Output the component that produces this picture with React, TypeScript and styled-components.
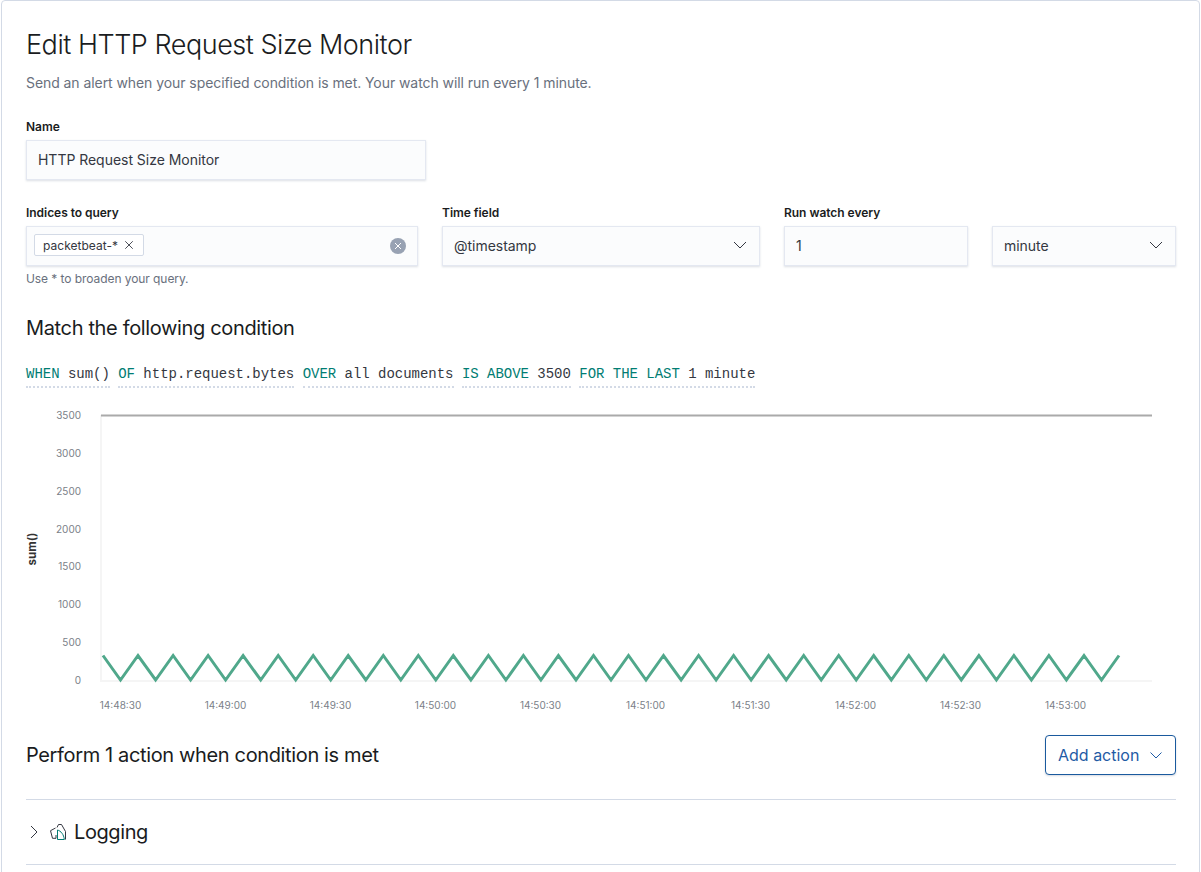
import React from 'react'
import styled, { createGlobalStyle } from 'styled-components'

const GlobalStyle = createGlobalStyle`
  html, body {
    margin: 0;
    padding: 0;
    height: 872px;
    overflow: hidden;
    background: #fff;
    font-family: Inter, "Liberation Sans", sans-serif;
    color: #1a1c21;
  }
`

const Panel = styled.div`
  box-sizing: border-box;
  width: 1199px;
  height: 900px;
  margin-left: 1px;
  padding: 24px 23px 24px 24px;
  background: #fff;
  border: 1px solid #d3dae6;
  border-radius: 4px;
`

const Title = styled.h1`
  margin: 0;
  height: 40px;
  font-size: 27px;
  line-height: 40px;
  font-weight: 300;
  letter-spacing: -0.47px;
`

const Subtitle = styled.p`
  margin: 8px 0 0;
  font-size: 14px;
  line-height: 20px;
  letter-spacing: -0.07px;
  color: #69707d;
`

const Label = styled.label`
  display: block;
  height: 16px;
  margin-bottom: 5px;
  font-size: 12px;
  line-height: 16px;
  font-weight: 600;
  letter-spacing: -0.04px;
`

const NameField = styled.div`
  width: 400px;
  margin-top: 26px;
`

const FieldBox = styled.div`
  box-sizing: border-box;
  display: flex;
  align-items: center;
  justify-content: space-between;
  height: 40px;
  padding: 0 11px 2px;
  background: #fbfcfd;
  border: 1px solid #e4e8f1;
  box-shadow: 0 1px 2px rgba(152, 162, 179, 0.35);
  font-size: 14px;
  letter-spacing: -0.03px;
  color: #343741;
`

const FieldsRow = styled.div`
  display: flex;
  gap: 24px;
  margin-top: 25px;
`

const Field = styled.div<{ $width: number }>`
  flex: none;
  width: ${(p) => p.$width}px;
`

const LabelSpacer = styled.div`
  height: 21px;
`

const Tag = styled.span`
  box-sizing: border-box;
  display: inline-flex;
  align-items: center;
  gap: 6px;
  height: 22px;
  margin-left: -4px;
  padding: 0 9px 0 8px;
  background: #fff;
  border: 1px solid #d3dae6;
  border-radius: 2px;
  font-size: 12px;
  letter-spacing: 0.03px;
  color: #343741;
`

const ClearButton = styled.span`
  display: flex;
  align-items: center;
  justify-content: center;
  width: 16px;
  height: 16px;
  margin-bottom: -2px;
  border-radius: 50%;
  background: #98a2b3;
`

const HelpText = styled.div`
  margin-top: 5px;
  font-size: 12px;
  line-height: 16px;
  letter-spacing: -0.07px;
  color: #69707d;
`

const ConditionHeading = styled.h2`
  margin: 27px 0 0;
  font-size: 20px;
  line-height: 28px;
  font-weight: 400;
  letter-spacing: -0.35px;
`

const Expression = styled.div`
  display: flex;
  gap: 8.4px;
  margin-top: 22px;
  font-family: "Liberation Mono", monospace;
  font-size: 14px;
  line-height: 20px;
  letter-spacing: -0.02px;
`

const ExpressionPart = styled.span`
  padding-bottom: 2px;
  border-bottom: 2px dotted #d3dae6;
  color: #343741;
  white-space: pre;
`

const Keyword = styled.span`
  color: #017d73;
`

const ChartArea = styled.div`
  margin: 17px 0 0 -26px;
`

const ChartSvg = styled.svg`
  display: block;
`

const ChartLabel = styled.text`
  font-family: Inter, sans-serif;
  font-size: 10px;
  fill: #7b7f88;
`

const AxisTitle = styled.text`
  font-family: Inter, sans-serif;
  font-size: 11.5px;
  font-weight: 700;
  fill: #333;
`

const ActionsHeader = styled.div`
  display: flex;
  align-items: center;
  justify-content: space-between;
  margin-top: 15px;
`

const ActionsHeading = styled.h2`
  margin: 0;
  font-size: 20px;
  line-height: 28px;
  font-weight: 400;
  letter-spacing: -0.36px;
`

const AddButton = styled.button`
  box-sizing: border-box;
  display: flex;
  align-items: center;
  justify-content: space-between;
  width: 131px;
  height: 40px;
  padding: 0 13px 0 12px;
  background: #fff;
  border: 1px solid #1a5a9e;
  border-radius: 4px;
  box-shadow: 0 1px 2px rgba(152, 162, 179, 0.4);
  font-family: inherit;
  font-size: 16px;
  white-space: nowrap;
  color: #1f5ba5;
`

const ActionRow = styled.div`
  display: flex;
  align-items: center;
  height: 64px;
  margin-top: 24px;
  border-top: 1px solid #d3dae6;
  border-bottom: 1px solid #d3dae6;
`

const ActionToggle = styled.span`
  display: flex;
  margin-right: 8px;
`

const ActionIcon = styled.span`
  display: flex;
  margin-right: 8px;
`

const ActionName = styled.span`
  font-size: 20px;
  line-height: 28px;
  letter-spacing: -0.4px;
`

const Chevron: React.FC<{ color?: string }> = ({ color = '#343741' }) => (
  <svg width="16" height="16" viewBox="0 0 16 16" fill="none" stroke={color} strokeWidth="1">
    <path d="M2 5l6 6 6-6" />
  </svg>
)

const Cross: React.FC<{ size: number; color: string; weight: number }> = ({ size, color, weight }) => (
  <svg width={size} height={size} viewBox="0 0 16 16" fill="none" stroke={color} strokeWidth={weight}>
    <path d="M2 2l12 12M14 2L2 14" />
  </svg>
)

const yTicks = [
  { label: '3500', y: 415 },
  { label: '3000', y: 453 },
  { label: '2500', y: 491 },
  { label: '2000', y: 529 },
  { label: '1500', y: 566 },
  { label: '1000', y: 604 },
  { label: '500', y: 642 },
  { label: '0', y: 680 },
]

const xLabels = [
  '14:48:30',
  '14:49:00',
  '14:49:30',
  '14:50:00',
  '14:50:30',
  '14:51:00',
  '14:51:30',
  '14:52:00',
  '14:52:30',
  '14:53:00',
]

// zigzag of the series: 29 periods of 35px, starts and ends on a peak
const seriesPoints = () => {
  const points: string[] = []
  for (let i = 0; i <= 58; i++) {
    const x = 103 + i * 17.517
    points.push(`${x.toFixed(1)},${i % 2 === 0 ? 655.5 : 680}`)
  }
  return points.join(' ')
}

const Chart: React.FC = () => (
  <ChartSvg width="1199" height="315" viewBox="0 405 1199 315">
    <path d="M101 415V681H1152" fill="none" stroke="#f5f5f5" strokeWidth="2" />
    <line x1="101" y1="415.5" x2="1152" y2="415.5" stroke="#aaa" strokeWidth="2" />
    <polyline points={seriesPoints()} fill="none" stroke="#50a88b" strokeWidth="3" />
    {yTicks.map((t) => (
      <ChartLabel key={t.label} x="81" y={t.y + 3.5} textAnchor="end">
        {t.label}
      </ChartLabel>
    ))}
    {xLabels.map((label, i) => (
      <ChartLabel key={label} x={120.5 + i * 105} y="709" textAnchor="middle">
        {label}
      </ChartLabel>
    ))}
    <AxisTitle x="0" y="0" transform="translate(36 549) rotate(-90)" textAnchor="middle">
      sum()
    </AxisTitle>
  </ChartSvg>
)

const App: React.FC = () => (
  <>
    <GlobalStyle />
    <Panel>
      <Title>Edit HTTP Request Size Monitor</Title>
      <Subtitle>Send an alert when your specified condition is met. Your watch will run every 1 minute.</Subtitle>

      <NameField>
        <Label>Name</Label>
        <FieldBox>HTTP Request Size Monitor</FieldBox>
      </NameField>

      <FieldsRow>
        <Field $width={392}>
          <Label>Indices to query</Label>
          <FieldBox>
            <Tag>
              packetbeat-*
              <Cross size={10} color="#343741" weight={1.4} />
            </Tag>
            <ClearButton>
              <Cross size={8} color="#fff" weight={2} />
            </ClearButton>
          </FieldBox>
          <HelpText>Use * to broaden your query.</HelpText>
        </Field>
        <Field $width={318}>
          <Label>Time field</Label>
          <FieldBox>
            @timestamp
            <Chevron />
          </FieldBox>
        </Field>
        <Field $width={184}>
          <Label>Run watch every</Label>
          <FieldBox>1</FieldBox>
        </Field>
        <Field $width={184}>
          <LabelSpacer />
          <FieldBox>
            minute
            <Chevron />
          </FieldBox>
        </Field>
      </FieldsRow>

      <ConditionHeading>Match the following condition</ConditionHeading>
      <Expression>
        <ExpressionPart>
          <Keyword>WHEN</Keyword> sum()
        </ExpressionPart>
        <ExpressionPart>
          <Keyword>OF</Keyword> http.request.bytes
        </ExpressionPart>
        <ExpressionPart>
          <Keyword>OVER</Keyword> all documents
        </ExpressionPart>
        <ExpressionPart>
          <Keyword>IS ABOVE</Keyword> 3500
        </ExpressionPart>
        <ExpressionPart>
          <Keyword>FOR THE LAST</Keyword> 1 minute
        </ExpressionPart>
      </Expression>

      <ChartArea>
        <Chart />
      </ChartArea>

      <ActionsHeader>
        <ActionsHeading>Perform 1 action when condition is met</ActionsHeading>
        <AddButton>
          Add action
          <svg width="12" height="12" viewBox="0 0 12 12" fill="none" stroke="#1f5ba5" strokeWidth="1">
            <path d="M0.500 3.500L6 9l5.500-5.500" />
          </svg>
        </AddButton>
      </ActionsHeader>

      <ActionRow>
        <ActionToggle>
          <svg width="16" height="16" viewBox="0 0 16 16" fill="none" stroke="#343741" strokeWidth="1">
            <path d="M5 2l6 6-6 6" />
          </svg>
        </ActionToggle>
        <ActionIcon>
          <svg width="16" height="16" viewBox="0 0 16 16" fill="none" strokeWidth="1">
            <path d="M5.500 4L0.500 6.700l2 7.600h3.500V11" stroke="#343741" />
            <path d="M7 3.500L8.500 0.500h3l4 7v8" stroke="#343741" />
            <path d="M7.500 15.500V6c3.500 1 6.300 4.500 6.800 9.500z" stroke="#017d73" />
          </svg>
        </ActionIcon>
        <ActionName>Logging</ActionName>
      </ActionRow>
    </Panel>
  </>
)

export default App
